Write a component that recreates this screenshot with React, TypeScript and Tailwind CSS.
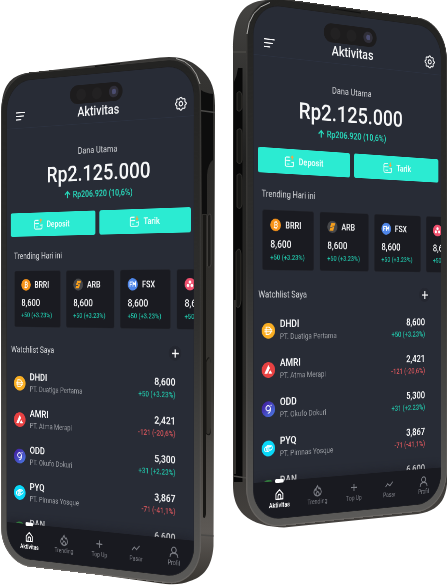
import React from "react";

type Point = [number, number];

const SCREEN_W = 375;
const SCREEN_H = 812;

// Projective transform that maps the flat screen onto a quadrilateral
// given as top-left, top-right, bottom-right, bottom-left.
function project(quad: [Point, Point, Point, Point]): string {
  const [[x0, y0], [x1, y1], [x2, y2], [x3, y3]] = quad;
  const dx1 = x1 - x2;
  const dx2 = x3 - x2;
  const dx3 = x0 - x1 + x2 - x3;
  const dy1 = y1 - y2;
  const dy2 = y3 - y2;
  const dy3 = y0 - y1 + y2 - y3;
  const det = dx1 * dy2 - dx2 * dy1;
  const g = (dx3 * dy2 - dx2 * dy3) / det;
  const h = (dx1 * dy3 - dx3 * dy1) / det;
  const a = x1 - x0 + g * x1;
  const b = x3 - x0 + h * x3;
  const d = y1 - y0 + g * y1;
  const e = y3 - y0 + h * y3;
  const w = SCREEN_W;
  const t = SCREEN_H;
  return `matrix3d(${a / w},${d / w},0,${g / w},${b / t},${e / t},0,${h / t},0,0,1,0,${x0},${y0},0,1)`;
}

function CoinIcon({ kind, size }: { kind: string; size: number }) {
  return (
    <svg width={size} height={size} viewBox="0 0 24 24" className="shrink-0" fill="none">
      {kind === "btc" && (
        <>
          <circle cx="12" cy="12" r="12" fill="#f7931a" />
          <path
            d="M9 7h4.2a2.3 2.3 0 0 1 0 4.8H9.4M13 11.8a2.6 2.6 0 0 1 0 5.2H8M10 7v10M11 5v2M13.5 5v2M11 17v2M13.5 17v2"
            stroke="#fff"
            strokeWidth="1.7"
          />
        </>
      )}
      {kind === "arb" && (
        <>
          <circle cx="12" cy="12" r="12" fill="#46474a" />
          <path d="M9.500 4.500H19l-1.800 5H12l-.6 1.500h5.100L14 19.500H5l1.800-5H12l.5-1.500H6.500z" fill="#f9a01b" />
        </>
      )}
      {kind === "fsx" && (
        <>
          <circle cx="12" cy="12" r="12" fill="#4f86e8" />
          <path d="M5.500 16.500v-9H11M5.500 12h4.500M12.500 16.500v-9l3 4 3-4v9M12.500 12h6" stroke="#fff" strokeWidth="1.900" />
        </>
      )}
      {kind === "asa" && (
        <>
          <circle cx="12" cy="12" r="12" fill="#f0506e" />
          <circle cx="12" cy="8" r="3" fill="#fff" />
          <circle cx="7.600" cy="14.800" r="3" fill="#fff" />
          <circle cx="16.400" cy="14.800" r="3" fill="#fff" />
        </>
      )}
      {kind === "dai" && (
        <>
          <circle cx="12" cy="12" r="12" fill="#f9ae22" />
          <path d="M8 6.500h3.500a5.500 5.500 0 0 1 0 11H8zM5 10.500h14M5 13.500h14" stroke="#fff" strokeWidth="1.500" />
        </>
      )}
      {kind === "avax" && (
        <>
          <circle cx="12" cy="12" r="12" fill="#e84142" />
          <path d="M11.300 5.500c.4-.7 1-.7 1.400 0l1.500 2.700c.3.6.3 1.200 0 1.800L10.300 17c-.3.500-.7.700-1.300.7H6c-.8 0-1.100-.5-.7-1.200z" fill="#fff" />
          <path d="M14.600 13.200c.4-.7 1-.7 1.400 0l2.300 3.400c.4.700.1 1.100-.7 1.100h-4.500c-.8 0-1.100-.5-.7-1.100z" fill="#fff" />
        </>
      )}
      {kind === "graph" && (
        <>
          <defs>
            <linearGradient id="graphFill" x1="0" y1="0" x2="1" y2="1">
              <stop offset="0.2" stopColor="#4328a8" />
              <stop offset="1" stopColor="#4a7ee8" />
            </linearGradient>
          </defs>
          <circle cx="12" cy="12" r="12" fill="url(#graphFill)" />
          <circle cx="11.500" cy="10.500" r="3.800" stroke="#fff" strokeWidth="1.700" />
          <path d="M15.300 10.500v3.500c0 2-1.200 3.600-4.300 4.200" stroke="#fff" strokeWidth="1.700" />
          <circle cx="16.800" cy="6.300" r="1.100" fill="#fff" />
        </>
      )}
      {kind === "gno" && (
        <>
          <circle cx="12" cy="12" r="12" fill="#08d8f8" />
          <path
            d="M10.500 7.500h5a3.500 3.500 0 0 1 0 7H13V10M13.500 16.500h-5a3.500 3.500 0 0 1 0-7H17M11 14.500v-5M10.500 7.500C9 8 8.500 10 8.500 12s.5 3 2.500 3"
            stroke="#fff"
            strokeWidth="1.500"
          />
        </>
      )}
      {kind === "dan" && <circle cx="12" cy="12" r="12" fill="#3fae4c" />}
    </svg>
  );
}

function MoneyIcon({ down }: { down?: boolean }) {
  return (
    <svg width="20" height="20" viewBox="0 0 19 19" fill="none">
      <path d="M10 3H4.500A2.500 2.500 0 0 0 2 5.500v9A2.500 2.500 0 0 0 4.500 17h10a2.500 2.500 0 0 0 2.500-2.500V9.500M2 8h9M17 11H13" stroke="#effffc" strokeWidth="1.500" />
      <path d="M5 13.500h4.500" stroke="#effffc" strokeWidth="1.200" />
      <path d={down ? "M14.500 1v6M12.300 5l2.200 2.200L16.700 5" : "M14.500 7V1.500M12.300 3.500l2.200-2.200 2.200 2.200"} stroke="#e9a94c" strokeWidth="1.800" />
    </svg>
  );
}

function GearIcon() {
  const teeth = Array.from({ length: 65 }, (_, i) => {
    const angle = (i / 64) * Math.PI * 2;
    const r = 9.2 + 1.05 * Math.cos(angle * 8);
    return `${(11 + r * Math.cos(angle)).toFixed(2)},${(11 + r * Math.sin(angle)).toFixed(2)}`;
  }).join(" ");
  return (
    <svg width="22" height="22" viewBox="0 0 22 22" fill="none" stroke="#f5f6f7" strokeWidth="2">
      <polygon points={teeth} />
      <circle cx="11" cy="11" r="3.400" />
    </svg>
  );
}

const trending = [
  { name: "BRRI", icon: "btc" },
  { name: "ARB", icon: "arb" },
  { name: "FSX", icon: "fsx" },
  { name: "", icon: "asa" },
];

const watchlist = [
  { name: "DHDI", company: "PT. Duatiga Pertama", price: "8,600", change: "+50 (+3.23%)", icon: "dai", up: true },
  { name: "AMRI", company: "PT. Atma Merapi", price: "2,421", change: "-121 (-20,6%)", icon: "avax", up: false },
  { name: "ODD", company: "PT. Okufo Dokuri", price: "5,300", change: "+31 (+2.23%)", icon: "graph", up: true },
  { name: "PYQ", company: "PT. Pimnas Yosque", price: "3,867", change: "-71 (-41,1%)", icon: "gno", up: false },
  { name: "DAN", company: "", price: "6,600", change: "", icon: "dan", up: true },
];

const tabs = [
  { label: "Aktivitas", path: "M2.500 8.500 9 2l6.500 6.500V17h-13zM6.500 17v-5a2.500 2.500 0 0 1 5 0v5" },
  {
    label: "Trending",
    path: "M9 1c1 3.500 2 4 3 5.500 1-.3 1.300-1 1.300-1.800C15.500 7 16 9 16 11a7 6.500 0 0 1-14 0c0-2 1-3.500 2.500-5 .3 1.500.8 2 1.500 2.300C6 5.500 7 3 9 1zM9 17.500c-2 0-3-1.500-3-3 0-1.800 2-2.500 2.500-4.500 2 1 3.500 2.700 3.500 4.500s-1 3-3 3z",
  },
  { label: "Top Up", path: "M9 3v12M3 9h12" },
  { label: "Pasar", path: "M1.500 13 6 8l4.500 3.500L16.500 5" },
  { label: "Profil", path: "M9 1.500a4.300 4.500 0 1 1 0 9 4.300 4.500 0 0 1 0-9M1.500 18c0-4.500 3-7 7.500-7s7.500 2.500 7.500 7" },
];

function Screen() {
  return (
    <div className="relative flex h-[812px] w-[375px] flex-col overflow-hidden rounded-[50px] bg-[#282c36] text-[#f6f7f8]">
      <div className="absolute left-[133px] top-[16px] flex h-[31px] w-[106px] items-center justify-end rounded-full bg-[#1d1c1d] pr-2">
        <div className="mr-[12px] h-[20px] w-[20px] rounded-full bg-[#222122]" />
        <div className="mr-[14px] h-[20px] w-[20px] rounded-full bg-[#222122]" />
        <div className="flex h-[19px] w-[19px] items-center justify-center rounded-full bg-[#302f39]">
          <div className="h-[9px] w-[8px] rounded-full bg-[#4b4d70]" />
        </div>
      </div>

      <header className="flex h-[81px] shrink-0 items-center justify-between border-b border-[#2c3240] pl-[19px] pr-[13px] pt-[39px]">
        <svg width="20" height="16" viewBox="0 0 20 16" stroke="#f5f6f7" strokeWidth="2.200">
          <path d="M0 2h20M0 8h17M0 14h12" />
        </svg>
        <div className="pl-[2px] pt-[2px] text-[21.500px] font-medium leading-6">Aktivitas</div>
        <GearIcon />
      </header>

      <main className="flex min-h-0 flex-1 flex-col overflow-hidden">
        <section className="flex flex-col items-center pl-[3px] pt-[35px]">
          <div className="text-[14.500px] leading-5 text-[#d0d2d6]">Dana Utama</div>
          <div className="mt-[5px] text-[36.500px] font-medium leading-[44px]">Rp2.125.000</div>
          <div className="mt-[2px] flex items-center gap-[5px] pl-[3px] text-[14px] font-semibold leading-5 text-[#27d9bb]">
            <svg width="12" height="14" viewBox="0 0 12 14" fill="none" stroke="#27d9bb" strokeWidth="2.200">
              <path d="M6 13V2M1 7l5-5 5 5" />
            </svg>
            Rp206.920 (10,6%)
          </div>
        </section>

        <section className="mt-[18px] grid h-10 shrink-0 grid-cols-2 gap-2 pl-2 pr-[5px] text-[14px] font-semibold text-[#effffc]">
          <div className="flex items-center justify-center gap-2 rounded-[4px] bg-[#2bebd2] pr-1">
            <MoneyIcon />
            Deposit
          </div>
          <div className="flex items-center justify-center gap-2 rounded-[4px] bg-[#2bebd2]">
            <MoneyIcon down />
            Tarik
          </div>
        </section>

        <div className="mt-[23px] pl-[15px] text-[14px] leading-5 text-[#d4d6d9]">Trending Hari ini</div>
        <section className="mt-[15px] flex h-24 shrink-0 gap-[11px] pl-4">
          {trending.map((item) => (
            <div key={item.icon} className="flex w-[98px] shrink-0 flex-col whitespace-nowrap rounded-[4px] border border-[#22242b] bg-[#1a1b21] pl-[14px] pt-[13px]">
              <div className="flex h-5 items-center gap-2 text-[14px] font-semibold">
                <CoinIcon kind={item.icon} size={20} />
                {item.name}
              </div>
              <div className="mt-[11px] text-[16px] font-medium leading-5">8,600</div>
              <div className="mt-[3px] text-[11px] font-medium leading-4 text-[#21bfa5]">+50 (+3.23%)</div>
            </div>
          ))}
        </section>

        <div className="mt-[26px] flex h-6 shrink-0 items-center justify-between pl-[9px] pr-[23px] text-[14px] text-[#d8dadd]">
          Watchlist Saya
          <div className="flex h-6 w-6 items-center justify-center rounded-full bg-[#242730]">
            <svg width="13" height="13" viewBox="0 0 14 14" stroke="#fff" strokeWidth="2.400">
              <path d="M7 0v14M0 7h14" />
            </svg>
          </div>
        </div>
        <section className="mt-[14px] flex flex-col">
          {watchlist.map((row) => (
            <div key={row.name} className="flex h-[62px] shrink-0 items-center pl-[15px] pr-[34px]">
              <CoinIcon kind={row.icon} size={25} />
              <div className="ml-[9px] h-10 flex-1">
                <div className="text-[16px] font-semibold leading-5">{row.name}</div>
                <div className="text-[12px] leading-5 text-[#94979d]">{row.company}</div>
              </div>
              <div className="h-10 text-right">
                <div className="text-[16px] font-semibold leading-5">{row.price}</div>
                <div className={row.up ? "text-[12px] font-medium leading-5 text-[#21bfa5]" : "text-[12px] font-medium leading-5 text-[#cf5359]"}>{row.change}</div>
              </div>
            </div>
          ))}
        </section>
      </main>

      <nav className="relative flex h-[59px] shrink-0 bg-[#191a20] pl-[12px] pr-px pt-3 shadow-[0_-4px_16px_rgba(25,26,32,0.55)]">
        <div className="absolute -top-[3px] left-[40px] h-[6px] w-[16px] rounded-[2px] bg-white" />
        {tabs.map((tab, i) => (
          <div key={tab.label} className={i === 0 ? "flex flex-1 flex-col items-center text-white" : "flex flex-1 flex-col items-center text-[#7d7f86]"}>
            <svg width="18" height="18" viewBox="0 0 18 18" fill="none" stroke="currentColor" strokeWidth="1.800" className="overflow-visible">
              <path d={tab.path} />
            </svg>
            <div className={i === 0 ? "mt-[3px] text-[10px] font-semibold leading-3" : "mt-[3px] text-[10px] leading-3"}>{tab.label}</div>
          </div>
        ))}
      </nav>
    </div>
  );
}

function Phone({ quad }: { quad: [Point, Point, Point, Point] }) {
  return (
    <div className="absolute left-0 top-0 h-[812px] w-[375px] origin-top-left" style={{ transform: project(quad) }}>
      <div className="absolute -inset-[13px] rounded-[62px] bg-gradient-to-b from-[#3a3937] via-[#353432] to-[#6a6764]" />
      <div className="absolute -inset-[11px] rounded-[60px] bg-gradient-to-b from-[#232322] via-[#2f2f2e] to-[#5b5a58]" />
      <div className="absolute -inset-px rounded-[51px] bg-[#1f1f21]" />
      <Screen />
    </div>
  );
}

export default function App() {
  return (
    <div className="relative h-[585px] w-[447px] overflow-hidden bg-white font-['Roboto',sans-serif]">
      <svg className="absolute left-0 top-0" width="447" height="585" viewBox="0 0 447 585" fill="none">
        <defs>
          <linearGradient id="body" x1="0" y1="0" x2="0" y2="1">
            <stop offset="0" stopColor="#383735" />
            <stop offset="0.2" stopColor="#2b2a28" />
            <stop offset="0.6" stopColor="#35332f" />
            <stop offset="0.9" stopColor="#5d5955" />
            <stop offset="1" stopColor="#36332f" />
          </linearGradient>
          <linearGradient id="bodyDark" x1="0" y1="0" x2="0" y2="1">
            <stop offset="0" stopColor="#454442" />
            <stop offset="0.3" stopColor="#20201f" />
            <stop offset="0.75" stopColor="#2b2a28" />
            <stop offset="1" stopColor="#45423f" />
          </linearGradient>
        </defs>

        <path d="M1.500 110C2 86 10 76 27 73L160 57.500C183 55 193 62 202 70C212 80 215 90 215 106L213.500 546C212 568 203 577 190 581C181 585 171 585 158 583L36 566C14 562 3 551 1.500 532Z" fill="url(#body)" />
        <path d="M201 90Q205 93 213 94V160Q208 163 207 175V214H202Z" fill="#0d0d0d" />
        <path d="M200 110.500 215 112.500M201 535 213.500 536" stroke="#4b4a48" strokeWidth="1.500" />
        <path d="M207.500 216Q211 211 211 218V264Q210 269 207.500 266Z" fill="#1d1c1a" stroke="#4a4845" strokeWidth="0.700" />
        <path d="M203 215V517Q205 520 206 514V434Q211 438 211 430V362Q209 353 206 361V215Z" fill="#181715" />
        <path d="M206.500 362Q210.500 353 211 364V428Q210 437 206.500 433Z" fill="#34322e" />

        <path d="M233 50C233 22 239 4 262 0.500Q270-1 286 1L412 20C436 24 446 37 447 61V484C445 504 435 511 418 514L284 527.500C248 526 233 512 233 485Z" fill="url(#bodyDark)" />
        <path d="M234 82Q237 76 238 68H242.500V482H234Z" fill="#080808" />
        <path d="M233 52 247 52M233 476 247 478" stroke="#4a4845" strokeWidth="1.500" />
        <path d="M237 93Q241 89 242 96V108Q240 113 237 110ZM237 130Q242 126 242 134V160Q241 166 237 162ZM237 175Q242 171 242 180V204Q241 211 237 207ZM236 252Q240 245 241 254V300Q240 311 236 306Z" fill="#171715" stroke="#43413e" strokeWidth="0.600" />
        <path d="M235 300V474" stroke="#34322f" strokeWidth="2" />
      </svg>

      <Phone quad={[[7, 82.2], [193.700, 64.800], [193.700, 578], [7, 556.500]]} />
      <Phone quad={[[253.500, 3], [440.700, 28.200], [440.700, 501.900], [253.500, 520.600]]} />

      <svg className="pointer-events-none absolute left-0 top-0" width="447" height="585" viewBox="0 0 447 585" fill="none">
        <path d="M176 58.500Q194 62 200 84" stroke="#a5a4a1" strokeWidth="1" />
        <path d="M247 34Q249 9 270 2.500" stroke="#b5b4b1" strokeWidth="1" />
        <path d="M95 66.500 120 63.500M335 9 361 13" stroke="#111" strokeWidth="1.200" />
      </svg>
    </div>
  );
}
